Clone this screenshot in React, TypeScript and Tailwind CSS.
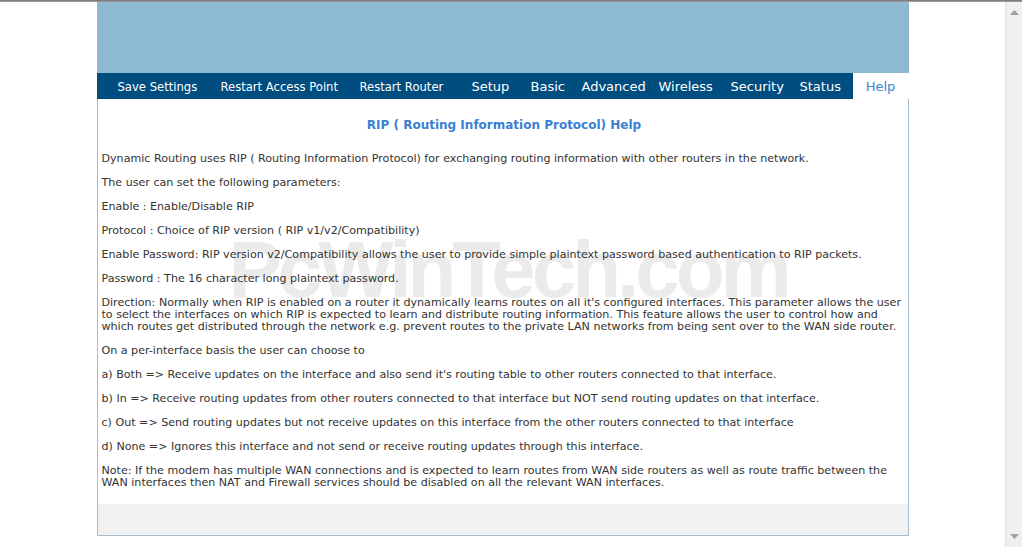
import React from 'react';

const navItems: { label: string; w: string; size: string }[] = [
  { label: 'Save Settings', w: 'w-[103px]', size: 'text-[11.6px] pt-[3px]' },
  { label: 'Restart Access Point', w: 'w-[139px]', size: 'text-[11.6px] pt-[3px]' },
  { label: 'Restart Router', w: 'w-[112px]', size: 'text-[11.6px] pt-[3px]' },
  { label: 'Setup', w: 'w-[59px]', size: 'text-[13px] pt-[1px]' },
  { label: 'Basic', w: 'w-[51px]', size: 'text-[13px] pt-[1px]' },
  { label: 'Advanced', w: 'w-[77px]', size: 'text-[13px] pt-[1px]' },
  { label: 'Wireless', w: 'w-[72px]', size: 'text-[13px] pt-[1px]' },
  { label: 'Security', w: 'w-[69px]', size: 'text-[13px] pt-[1px]' },
  { label: 'Status', w: 'w-[52px]', size: 'text-[13px] pt-[1px]' },
];

const paragraphs: string[] = [
  'Dynamic Routing uses RIP ( Routing Information Protocol) for exchanging routing information with other routers in the network.',
  'The user can set the following parameters:',
  'Enable : Enable/Disable RIP',
  'Protocol : Choice of RIP version ( RIP v1/v2/Compatibility)',
  'Enable Password: RIP version v2/Compatibility allows the user to provide simple plaintext password based authentication to RIP packets.',
  'Password : The 16 character long plaintext password.',
  "Direction: Normally when RIP is enabled on a router it dynamically learns routes on all it's configured interfaces. This parameter allows the user to select the interfaces on which RIP is expected to learn and distribute routing information. This feature allows the user to control how and which routes get distributed through the network e.g. prevent routes to the private LAN networks from being sent over to the WAN side router.",
  'On a per-interface basis the user can choose to',
  "a) Both => Receive updates on the interface and also send it's routing table to other routers connected to that interface.",
  'b) In => Receive routing updates from other routers connected to that interface but NOT send routing updates on that interface.',
  'c) Out => Send routing updates but not receive updates on this interface from the other routers connected to that interface',
  'd) None => Ignores this interface and not send or receive routing updates through this interface.',
  'Note: If the modem has multiple WAN connections and is expected to learn routes from WAN side routers as well as route traffic between the WAN interfaces then NAT and Firewall services should be disabled on all the relevant WAN interfaces.',
];

export default function App() {
  return (
    <div className="w-[1022px] h-[547px] overflow-hidden bg-white flex flex-col" style={{ fontFamily: '"DejaVu Sans", Verdana, sans-serif' }}>
      <div className="h-[2px] bg-gradient-to-b from-[#6f6f6f] to-[#a8a8a8] shrink-0" />
      <div className="flex flex-1 min-h-0">
        <div className="flex-1 flex justify-center">
          <div className="w-[812px] flex flex-col">
            <div className="h-[71px] bg-[#8dbad1] shrink-0" />
            <div className="h-[26px] bg-[#004d7f] flex items-stretch text-white pl-[21px] shrink-0">
              {navItems.map(n => (
                <div key={n.label} className={`${n.w} ${n.size} flex items-center whitespace-nowrap`}>
                  {n.label}
                </div>
              ))}
              <div className="ml-auto w-[56px] bg-white text-[#3a86d4] text-[13px] pt-[1px] flex items-center justify-center">Help</div>
            </div>
            <div className="relative flex-1 border-x border-[#a9bccb] pl-[4px] pr-[1px] text-[11.1px] leading-[12px] text-[#333333]">
              <div
                aria-hidden="true"
                className="absolute left-[131px] top-[131px] text-[80px] leading-none font-bold tracking-[-4px] text-[#ebebeb] whitespace-nowrap select-none pointer-events-none"
                style={{ fontFamily: '"Liberation Sans", Arial, sans-serif' }}
              >
                PcWinTech.com
              </div>
              <h1 className="relative text-center text-[12px] font-bold text-[#3a80d2] pt-[20px] pb-[21px] leading-[13px]">
                RIP ( Routing Information Protocol) Help
              </h1>
              <div className="relative flex flex-col gap-[12px]">
                {paragraphs.map((p, i) => (
                  <p key={i}>{p}</p>
                ))}
              </div>
            </div>
            <div className="h-[32px] bg-[#f1f1f1] border-x border-b border-[#a9bccb] shrink-0" />
            <div className="h-[11px] shrink-0" />
          </div>
        </div>
        <div className="w-[17px] bg-[#f0f0f0] border-l border-[#e2e2e2] flex flex-col items-center justify-between py-[8px]">
          <svg width="9" height="5" viewBox="0 0 9 5"><path d="M4.5 0 L9 5 L0 5 Z" fill="#a0a0a0" /></svg>
          <svg width="9" height="5" viewBox="0 0 9 5"><path d="M0 0 L9 0 L4.5 5 Z" fill="#a0a0a0" /></svg>
        </div>
      </div>
    </div>
  );
}
